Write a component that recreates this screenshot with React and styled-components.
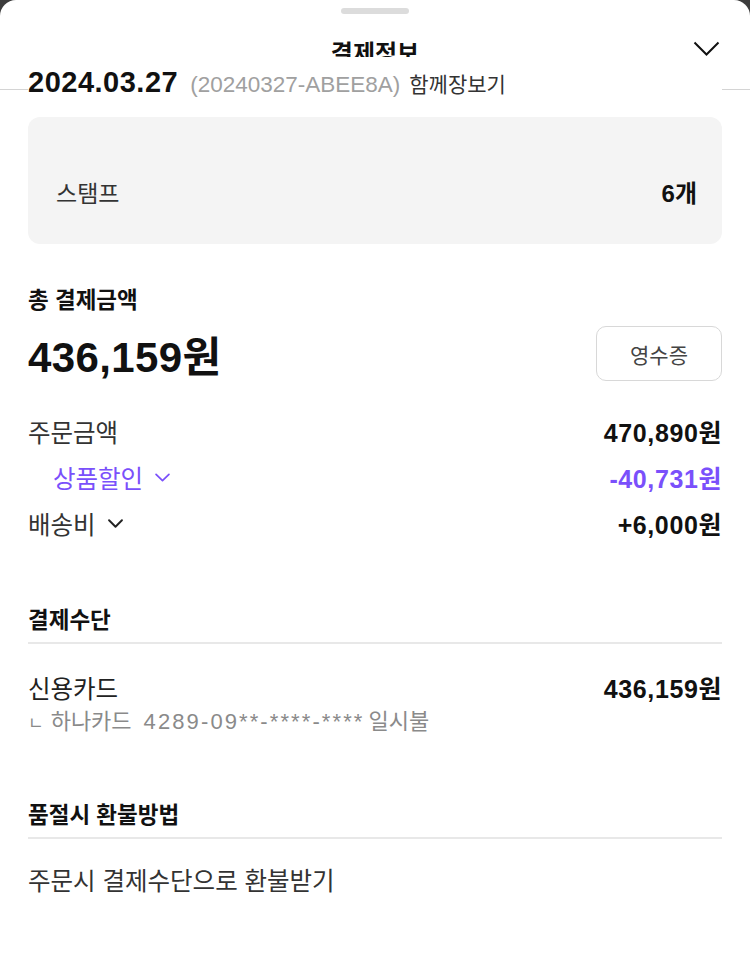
import React from 'react';
import styled, { createGlobalStyle } from 'styled-components';

const GlobalStyle = createGlobalStyle`
  body {
    margin: 0;
    background: #3c3c3c;
    font-family: 'Liberation Sans', 'Noto Sans CJK KR', sans-serif;
    color: #222;
  }
`;

const PURPLE = '#7a50fb';

const Sheet = styled.div`
  background: #fff;
  border-radius: 16px 16px 0 0;
  min-height: 972px;
  overflow: hidden;
`;

const Handle = styled.div`
  width: 68px;
  height: 6px;
  margin: 8px auto 0;
  border-radius: 3px;
  background: #dcdcdc;
`;

const Header = styled.div`
  position: relative;
  height: 76px;
  box-sizing: border-box;
  padding-top: 24px;
  border-bottom: 1px solid #d4d4d4;
  display: flex;
  justify-content: center;
`;

const HeaderTitle = styled.div`
  font-size: 24px;
  font-weight: 700;
  line-height: 32px;
  color: #111;
`;

const CloseButton = styled.button`
  position: absolute;
  right: 30px;
  top: 27px;
  border: 0;
  padding: 0;
  background: none;
  display: flex;
`;

const Content = styled.div`
  position: relative;
  margin: -33px 28px 0;
  background: #fff;
`;

const DateRow = styled.div`
  padding-top: 8px;
  height: 34px;
  display: flex;
  align-items: baseline;
  white-space: nowrap;
`;

const DateText = styled.span`
  font-size: 29px;
  font-weight: 700;
  letter-spacing: 0.5px;
  line-height: 34px;
  color: #111;
`;

const OrderNo = styled.span`
  margin-left: 12px;
  font-size: 22.5px;
  color: #a0a0a0;
`;

const Together = styled.span`
  margin-left: 9px;
  font-size: 21px;
  color: #333;
`;

const StampBox = styled.div`
  margin-top: 18px;
  height: 127px;
  box-sizing: border-box;
  padding: 63px 25px 0 28px;
  background: #f4f4f4;
  border-radius: 12px;
  display: flex;
  justify-content: space-between;
  line-height: 28px;
`;

const StampLabel = styled.span`
  font-size: 23px;
  color: #333;
`;

const StampCount = styled.span`
  font-size: 24px;
  font-weight: 700;
  color: #111;
`;

const SectionTitle = styled.div`
  margin-top: ${p => p.$top}px;
  font-size: 22.5px;
  font-weight: 700;
  line-height: 30px;
  color: #111;
  padding-bottom: ${p => (p.$divider ? 6 : 0)}px;
  border-bottom: ${p => (p.$divider ? '2px solid #e8e8e8' : 'none')};
`;

const TotalRow = styled.div`
  margin-top: 10px;
  height: 55px;
  display: flex;
  align-items: center;
  justify-content: space-between;
`;

const TotalAmount = styled.span`
  font-size: 42px;
  font-weight: 700;
  letter-spacing: 0.4px;
  color: #111;
`;

const ReceiptButton = styled.button`
  width: 126px;
  height: 55px;
  border: 1px solid #d8d8d8;
  border-radius: 10px;
  background: #fff;
  font-family: inherit;
  font-size: 21px;
  color: #444;
`;

const Breakdown = styled.div`
  margin-top: 27px;
`;

const Row = styled.div`
  height: 46px;
  display: flex;
  align-items: center;
  justify-content: space-between;
  padding-left: ${p => (p.$indent ? 25 : 0)}px;
  color: ${p => (p.$accent ? PURPLE : '#333')};
`;

const Label = styled.span`
  display: flex;
  align-items: center;
  gap: 12px;
  font-size: 24.5px;
`;

const Amount = styled.span`
  font-size: 25px;
  font-weight: 700;
  letter-spacing: 0.6px;
  color: ${p => (p.$accent ? PURPLE : '#111')};
`;

const PayRow = styled.div`
  margin-top: 28px;
  height: 30px;
  display: flex;
  align-items: center;
  justify-content: space-between;
`;

const SubText = styled.div`
  margin-top: 7px;
  display: flex;
  align-items: baseline;
  line-height: 26px;
  font-size: 22px;
  color: #8a8a8a;
  white-space: pre;
`;

const Corner = styled.span`
  font-size: 17px;
  margin-right: 7px;
`;

const CardNumber = styled.span`
  margin: 0 4px 0 12px;
  letter-spacing: 2.1px;
`;

const PlainText = styled.div`
  margin-top: 28px;
  line-height: 30px;
  font-size: 24.5px;
  color: #333;
`;

const Chevron = ({ size = 14, color = 'currentColor', width = 1.6 }) => (
  <svg width={size} height={size * 0.6} viewBox="0 0 14 8" fill="none">
    <path d="M1 1l6 6 6-6" stroke={color} strokeWidth={width} strokeLinecap="round" strokeLinejoin="round" />
  </svg>
);

const App = () => (
  <>
    <GlobalStyle />
    <Sheet>
      <Handle />
      <Header>
        <HeaderTitle>결제정보</HeaderTitle>
        <CloseButton aria-label="닫기">
          <svg width="27" height="15" viewBox="0 0 27 15" fill="none">
            <path d="M1.5 1.5l12 12 12-12" stroke="#111" strokeWidth="2" strokeLinejoin="miter" />
          </svg>
        </CloseButton>
      </Header>
      <Content>
        <DateRow>
          <DateText>2024.03.27</DateText>
          <OrderNo>(20240327-ABEE8A)</OrderNo>
          <Together>함께장보기</Together>
        </DateRow>

        <StampBox>
          <StampLabel>스탬프</StampLabel>
          <StampCount>6개</StampCount>
        </StampBox>

        <SectionTitle $top={42}>총 결제금액</SectionTitle>
        <TotalRow>
          <TotalAmount>436,159원</TotalAmount>
          <ReceiptButton>영수증</ReceiptButton>
        </TotalRow>

        <Breakdown>
          <Row>
            <Label>주문금액</Label>
            <Amount>470,890원</Amount>
          </Row>
          <Row $indent $accent>
            <Label>상품할인 <Chevron size={15} /></Label>
            <Amount $accent>-40,731원</Amount>
          </Row>
          <Row>
            <Label>배송비 <Chevron size={15} color="#222" width={1.8} /></Label>
            <Amount>+6,000원</Amount>
          </Row>
        </Breakdown>

        <SectionTitle $top={60} $divider>결제수단</SectionTitle>
        <PayRow>
          <Label>신용카드</Label>
          <Amount>436,159원</Amount>
        </PayRow>
        <SubText>
          <Corner>ㄴ</Corner>
          <span>하나카드</span>
          <CardNumber>4289-09**-****-****</CardNumber>
          <span>일시불</span>
        </SubText>

        <SectionTitle $top={64} $divider>품절시 환불방법</SectionTitle>
        <PlainText>주문시 결제수단으로 환불받기</PlainText>
      </Content>
    </Sheet>
  </>
);

export default App;
